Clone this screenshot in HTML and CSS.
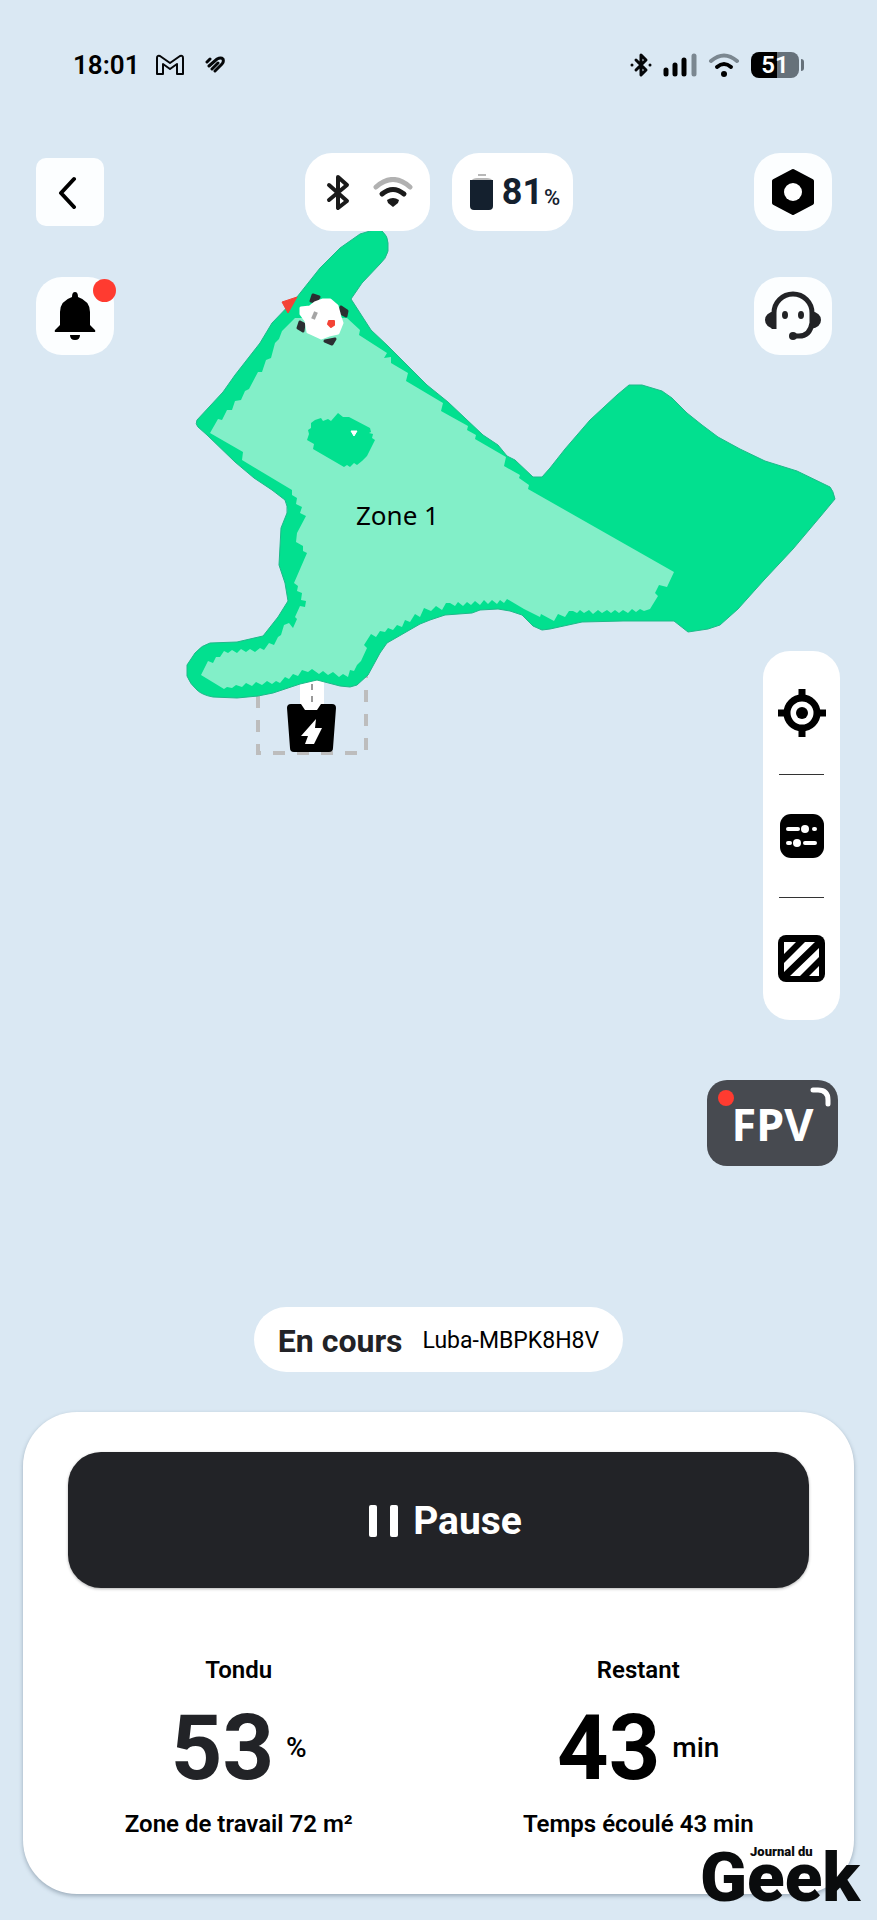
FILE: index.html
```
<!DOCTYPE html>
<html lang="fr">
<head>
    <meta charset="UTF-8">
    <meta name="viewport" content="width=device-width, initial-scale=1">
    <title>Luba-MBPK8H8V</title>
    <link rel="stylesheet" href="styles.css">
</head>
<body>
    <!-- carte -->
    <svg class="map" viewBox="0 0 877 780" aria-hidden="true">
        <rect x="300" y="676" width="24" height="36" fill="#fff"/>
        <path d="M258 696V753H366V675" fill="none" stroke="#bdbdbd" stroke-width="4" stroke-dasharray="12 12"/>
        <path d="M312 684V706" stroke="#999" stroke-width="2" stroke-dasharray="6 6"/>
        <path fill="#02e08f" stroke="#1fb98a" stroke-width="1" stroke-linejoin="round" d="M370 231Q378 228 382 231Q388 236 388 243V251Q386 259 380 264L362 283 351 299 371 330 388 346 427 385 448 402 483 435 498 445 507 456 515 460 533 477H542L550 468 565 449 590 420 617 395 629 385H642L662 391 672 398 687 413 702 425 718 437 740 449 765 461 797 471 830 487Q833 490 835 499L820 517 793 549 764 580 738 609 720 625 708 629 688 632 674 621H623L582 622 550 629 542 630 533 626 522 615 510 611 498 609 480 610 472 613 445 615 430 620 420 624 387 643 380 653 368 675 357 685 350 687 340 686 317 680 300 684 273 693 258 696 237 698 213 697Q202 695 197 690 190 684 187 676L187 665 195 653Q202 645 210 643L237 642 263 636 278 617 288 601 285 583 279 565 281 528 287 513Q288 506 285 500L272 490 254 478 235 462 207 435 198 427Q195 424 197 420L223 392 235 375 260 343 272 323 297 297 320 268 340 248 360 234Z"/>
        <path fill="#82efc8" d="M295 318L347 318 360 330 359 335 387 353 384 358 391 357 391 363 408 373 406 381 443 403 441 411 468 426 467 430 476 435 475 439 506 457 504 466 520 475 519 478 529 485 528 489 674 572 667 587 659 585 655 593 658 596 650 609 644 611 640 609 636 612 632 609 628 613 623 610 619 613 615 610 611 613 607 610 602 613 598 610 593 614 589 610 584 613 580 610 577 613 573 611 569 611 565 617 558 614 554 621 541 614 540 617 524 609 507 599 504 603 500 600 497 604 492 600 488 604 484 600 480 605 475 601 471 605 467 602 463 606 458 602 455 606 450 603 446 603 442 610 436 606 431 611 424 608 420 617 415 614 410 622 405 620 402 627 397 625 393 630 388 628 385 632 380 631 376 637 371 634 364 645 367 648 361 661 357 665 354 671 350 670 348 677 343 674 339 677 333 672 328 675 323 671 319 674 312 669 308 672 302 670 298 676 293 674 289 679 285 677 280 683 276 681 272 684 267 681 262 685 256 682 252 686 246 683 242 687 236 685 232 688 227 687 224 689 201 675 208 661 213 663 216 657 220 657 224 651 228 653 232 650 237 653 241 649 246 652 250 649 255 652 260 648 264 650 269 643 274 645 278 637 281 635 284 625 289 623 293 628 297 619 295 617 300 606 305 607 306 601 301 600 302 593 297 591 298 586 294 583 307 553 303 551 303 546 296 542 297 533 306 516 300 513 302 507 296 504 297 498 292 495 292 490 242 460 243 452 210 433 218 419 222 420 227 410 232 410 235 401 241 400 245 391 249 389 258 372 262 372 266 360 271 358 275 343 279 339 282 331Z"/>
        <path fill="#02e08f" d="M315 420L321 418 323 421 328 419 331 421 338 413 343 417 349 417 370 428 371 432 369 433 373 434 372 438 375 440 367 456 362 461 357 465 354 463 350 467 347 465 344 467 313 449 314 444 307 440 309 434 308 430 311 428 311 423Z"/>
        <path fill="#fff" stroke="#fff" stroke-linejoin="round" d="M351 431L357 431 354 436Z"/>
        <path fill="#f44336" stroke="#f44336" stroke-linejoin="round" d="M282 302L297 297 288 313Z"/>
        <g stroke-linejoin="round">
            <g fill="#2b2f32" stroke="#2b2f32" stroke-width="3">
                <path d="M313 295L319 297 316 302 311 301Z"/>
                <path d="M341 307L347 311 346 316 340 313Z"/>
                <path d="M300 322L304 324 303 331 298 328Z"/>
                <path d="M325 341L335 339 332 344Z"/>
            </g>
            <path fill="#fff" stroke="#fff" stroke-width="3" d="M301 308L310 307 315 303 323 300 330 300 337 306 340 317 342 323 338 333 329 335 321 338 308 332 306 321 301 314Z"/>
            <path stroke="#a5a5a5" stroke-width="4" d="M316 312L313 319"/>
            <path fill="#f44336" stroke="#f44336" stroke-width="2" d="M329 321L334 321 334 325 331 327 328 324Z"/>
        </g>
        <path d="M291 704H301L305 710H317L321 704H332Q336 704 336 708L333 748Q333 752 329 752H294Q290 752 290 748L287 708Q287 704 291 704Z"/>
        <path fill="#fff" d="M316 719L301 736H308L305 744H314L322 728H315Z"/>
        <text class="map-label" x="356" y="525">Zone 1</text>
    </svg>

    <div class="statusbar">
        <div class="status-left">
            <span class="clock">18:01</span>
            <svg width="28" height="22" viewBox="0 0 28 22" fill="none" stroke="#050709" stroke-width="2" stroke-linejoin="round"><path d="M1 20V4Q1 1 4 2L14 9 24 2Q27 1 27 4V20H21V10L14 15 7 10V20Z"/></svg>
            <svg class="heart" width="22" height="18" viewBox="0 0 22 18" fill="none" stroke="#050709" stroke-width="3" stroke-linecap="round"><path d="M3 6L6 3M5 10L13 3Q17 1 19 3 20 6 18 8L11 15M8 13L14 7"/></svg>
        </div>
        <div class="status-right">
            <svg width="22" height="26" viewBox="0 0 22 26" fill="none" stroke="#050709" stroke-width="3" stroke-linejoin="round" stroke-linecap="round"><path d="M6 8L16 18 11 23V3L16 8 6 18"/><path d="M2 13H2M20 13H20"/></svg>
            <svg width="34" height="24" viewBox="0 0 34 24" stroke="#000" stroke-width="5" stroke-linecap="round"><path d="M3 17V21M12 12V21M21 7V21"/><path stroke="#7b8790" d="M31 3V21"/></svg>
            <svg width="32" height="24" viewBox="0 0 32 24" fill="none" stroke-width="4" stroke-linecap="round"><path stroke="#7b8790" d="M3 8Q16 -3 29 8"/><path stroke="#000" d="M9 14Q16 8 23 14"/><circle cx="16" cy="21" r="3" fill="#000"/></svg>
            <span class="battery">51</span>
        </div>
    </div>

    <main>
        <div class="top-row">
            <div class="side">
                <button class="btn back" type="button" aria-label="Retour">
                    <svg width="20" height="34" viewBox="0 0 20 34" fill="none" stroke="#000" stroke-width="4" stroke-linecap="round" stroke-linejoin="round"><path d="M17 4L4 18 17 32"/></svg>
                </button>
            </div>
            <div class="center">
                <button class="pill connection" type="button" aria-label="Connexion">
                    <svg width="24" height="38" viewBox="0 0 24 38" fill="none" stroke="#1a1a1a" stroke-width="4" stroke-linecap="round" stroke-linejoin="round"><path d="M3 12L21 28 12 35V4L21 12 3 27"/></svg>
                    <svg width="40" height="30" viewBox="0 0 40 30" fill="none" stroke-width="5" stroke-linecap="round"><path stroke="#b1b1b1" d="M3 10Q20 -5 37 10"/><path stroke="#1a1a1a" d="M9 17Q20 8 31 17"/><path fill="#1a1a1a" d="M14 23Q20 19 26 23L25 26 20 30 15 26Z"/></svg>
                </button>
                <button class="pill charge" type="button">
                    <svg width="24" height="38" viewBox="0 0 24 38"><path fill="#b8b8b8" d="M8 1H16V3H8ZM1 8Q3 5 7 5H17Q21 5 23 8Z"/><path fill="#14202e" d="M0 7H23V33Q23 37 19 37H4Q0 37 0 33Z"/></svg>
                    <span class="charge-value">81</span><small>%</small>
                </button>
            </div>
            <div class="side right">
                <button class="btn" type="button" aria-label="Réglages">
                    <svg width="44" height="50" viewBox="0 0 44 50"><path stroke="#000" stroke-width="4" stroke-linejoin="round" d="M22 4L41 14V36L22 46 3 36V14Z"/><circle cx="22" cy="25" r="9" fill="#fff"/></svg>
                </button>
            </div>
        </div>

        <div class="second-row">
            <button class="btn bell" type="button" aria-label="Notifications">
                <svg width="42" height="50" viewBox="0 0 42 50"><path d="M21 1Q24 1 24 6 36 10 36 21V34L41 39Q42 41 40 41H2Q0 41 1 39L6 34V21Q6 10 18 6 18 1 21 1ZM16 44H26Q26 49 21 49T16 44Z"/></svg>
                <span class="badge"></span>
            </button>
            <button class="btn support" type="button" aria-label="Assistance">
                <svg width="58" height="50" viewBox="0 0 58 50" fill="none" stroke="#222326" stroke-width="5"><path d="M10 38V22A19 19 0 0 1 48 22V32Q46 45 35 45H29"/><path fill="#222326" stroke="none" d="M11 20V38Q1 36 1 29T11 20ZM47 20V38Q57 36 57 29T47 20Z"/><circle cx="29" cy="45" r="4" fill="#222326" stroke="none"/><ellipse cx="21" cy="24" rx="3" ry="4" fill="#222326" stroke="none"/><ellipse cx="37" cy="24" rx="3" ry="4" fill="#222326" stroke="none"/></svg>
            </button>
        </div>

        <div class="tools">
            <button type="button" aria-label="Centrer">
                <svg width="48" height="48" viewBox="0 0 48 48" fill="none" stroke="#000"><path stroke-width="7" d="M24 0V9M24 39V48M0 24H9M39 24H48"/><circle cx="24" cy="24" r="15" stroke-width="7"/><circle cx="24" cy="24" r="6" fill="#000" stroke="none"/></svg>
            </button>
            <button type="button" aria-label="Paramètres">
                <svg width="44" height="44" viewBox="0 0 44 44" stroke="#fff" stroke-width="4" stroke-linecap="round"><rect width="44" height="44" rx="11" fill="#000" stroke="none"/><path d="M8 15H18M34 15H35M8 29H10M25 29H35"/><circle cx="25" cy="15" r="4" fill="#fff" stroke="none"/><circle cx="17" cy="29" r="4" fill="#fff" stroke="none"/></svg>
            </button>
            <button type="button" aria-label="Zones">
                <svg width="47" height="47" viewBox="0 0 47 47"><rect width="47" height="47" rx="8"/><path fill="#fff" d="M6 7H18L6 19ZM27 7H37L6 37V28ZM41 13V22L22 41H12ZM41 31V41H31Z"/></svg>
            </button>
        </div>

        <button class="fpv" type="button">
            <span class="rec"></span>
            FPV
            <svg class="corner" width="21" height="21" viewBox="0 0 21 21" fill="none" stroke="#fff" stroke-width="5" stroke-linecap="round"><path d="M3 3H8Q18 3 18 13V17"/></svg>
        </button>

        <div class="device">
            <strong>En cours</strong>
            <span>Luba-MBPK8H8V</span>
        </div>

        <section class="card">
            <button class="pause" type="button">
                <svg width="30" height="32" viewBox="0 0 30 32" fill="#fff"><rect width="8" height="32" rx="2"/><rect x="21" width="8" height="32" rx="2"/></svg>
                Pause
            </button>
            <div class="stats">
                <div class="stat">
                    <h2>Tondu</h2>
                    <p class="value">53 <span>%</span></p>
                    <p>Zone de travail 72 m²</p>
                </div>
                <div class="stat dark">
                    <h2>Restant</h2>
                    <p class="value">43 <span>min</span></p>
                    <p>Temps écoulé 43 min</p>
                </div>
            </div>
        </section>
    </main>

    <div class="watermark">
        <span>Journal du</span>
        <b>Geek</b>
    </div>
</body>
</html>
```
FILE: styles.css
```
* {
    box-sizing: border-box;
}

body {
    position: relative;
    margin: 0;
    background-color: #dae8f3;
    color: #000;
    font-family: Roboto, "Liberation Sans", sans-serif;
}

button {
    padding: 0;
    border: none;
    font-family: inherit;
    color: inherit;
    cursor: pointer;
}

svg {
    display: block;
    flex: none;
}

.map {
    position: absolute;
    top: 0;
    left: 0;
    width: 100%;
    z-index: -1;
}

.map-label {
    font-family: "Noto Sans", sans-serif;
    font-size: 26px;
}

/* barre d'état */
.statusbar {
    display: flex;
    justify-content: space-between;
    align-items: center;
    height: 130px;
    padding: 0 73px;
}

.status-left {
    display: flex;
    align-items: center;
    gap: 16px;
}

.heart {
    margin-left: 4px;
}

.status-right {
    display: flex;
    align-items: center;
    gap: 11px;
}

.clock {
    font-size: 26px;
    font-weight: 600;
}

.battery {
    position: relative;
    width: 48px;
    height: 26px;
    margin-right: 5px;
    border-radius: 8px;
    background: linear-gradient(to right, #000 54%, #66717a 54%);
    color: #fff;
    font-size: 24px;
    font-weight: 600;
    line-height: 26px;
    text-align: center;
}

.battery::after {
    content: "";
    position: absolute;
    right: -5px;
    top: 7px;
    width: 3px;
    height: 12px;
    border-radius: 0 3px 3px 0;
    background-color: #66717a;
}

main {
    display: flex;
    flex-direction: column;
    padding: 23px 23px 22px;
}

/* boutons du haut */
.top-row {
    display: grid;
    grid-template-columns: 1fr auto 1fr;
    align-items: center;
    padding: 0 13px;
}

.center {
    display: flex;
    gap: 22px;
}

.right {
    display: flex;
    justify-content: flex-end;
    padding-right: 9px;
}

.btn {
    position: relative;
    display: flex;
    align-items: center;
    justify-content: center;
    width: 78px;
    height: 78px;
    border-radius: 26px;
    background-color: #fcfeff;
}

.back {
    width: 68px;
    height: 68px;
    padding-right: 6px;
    border-radius: 10px;
}

.pill {
    display: flex;
    align-items: center;
    justify-content: center;
    height: 78px;
    border-radius: 27px;
    background-color: #fff;
}

.connection {
    width: 125px;
    padding-left: 5px;
    gap: 23px;
}

.charge {
    width: 121px;
    padding-left: 6px;
    color: #14202e;
}

.charge-value {
    margin-left: 8px;
    font-size: 36px;
    font-weight: 700;
}

.charge small {
    padding-top: 10px;
    margin-left: 1px;
    font-size: 22px;
    font-weight: 500;
}

.second-row {
    display: flex;
    justify-content: space-between;
    margin-top: 46px;
    padding: 0 22px 0 13px;
}

.badge {
    position: absolute;
    top: 2px;
    right: -2px;
    width: 23px;
    height: 23px;
    border-radius: 50%;
    background-color: #ff3b30;
}

/* outils de la carte */
.tools {
    display: flex;
    flex-direction: column;
    align-self: flex-end;
    width: 77px;
    margin: 296px 14px 0 0;
    border-radius: 27px;
    background-color: #fff;
}

.tools button {
    position: relative;
    display: flex;
    align-items: center;
    justify-content: center;
    height: 123px;
    background: none;
}

.tools button + button::before {
    content: "";
    position: absolute;
    top: 0;
    left: 16px;
    right: 16px;
    height: 1px;
    background-color: #333;
}

.fpv {
    position: relative;
    align-self: flex-end;
    width: 131px;
    height: 86px;
    margin: 60px 16px 0 0;
    border-radius: 20px;
    background-color: #474a50;
    color: #fff;
    font-family: "Noto Sans", sans-serif;
    font-size: 45px;
    font-weight: 700;
    line-height: 88px;
}

.rec {
    position: absolute;
    top: 10px;
    left: 11px;
    width: 16px;
    height: 16px;
    border-radius: 50%;
    background-color: #ff3b30;
}

.corner {
    position: absolute;
    top: 7px;
    right: 7px;
}

.device {
    display: flex;
    align-items: center;
    align-self: center;
    gap: 20px;
    height: 65px;
    margin-top: 141px;
    padding: 2px 24px 0;
    border-radius: 33px;
    background-color: #fff;
    font-size: 23px;
}

.device strong {
    color: #222327;
    font-size: 32px;
}

/* carte du bas */
.card {
    margin-top: 40px;
    padding: 40px 16px 56px;
    border-radius: 54px;
    background-color: #fff;
    box-shadow: 0 2px 4px rgba(60, 80, 100, 0.4);
}

.pause {
    display: flex;
    align-items: center;
    justify-content: center;
    gap: 14px;
    width: calc(100% - 58px);
    height: 136px;
    margin: 0 29px;
    padding: 2px 0 0 14px;
    border-radius: 33px;
    background-color: #222327;
    box-shadow: 0 1px 3px rgba(0, 0, 0, 0.3);
    color: #fff;
    font-size: 39px;
    font-weight: 700;
}

.stats {
    display: grid;
    grid-template-columns: 1fr 1fr;
    margin-top: 68px;
    text-align: center;
}

.stat h2,
.stat p {
    margin: 0;
    font-size: 24px;
    font-weight: 600;
    line-height: 28px;
}

.stat .value {
    display: flex;
    align-items: center;
    justify-content: center;
    gap: 12px;
    margin: 14px 0 10px;
    color: #222327;
    font-size: 90px;
    font-weight: 700;
    line-height: 102px;
}

.stat.dark .value {
    color: #000;
}

.value span {
    padding-bottom: 3px;
    color: #000;
    font-size: 28px;
    font-weight: 500;
    line-height: 32px;
}

.watermark {
    position: absolute;
    right: 17px;
    bottom: 12px;
    color: #0a0c0d;
    line-height: 1;
}

.watermark span {
    position: absolute;
    top: -7px;
    left: 50px;
    font-size: 13px;
    font-weight: 900;
    white-space: nowrap;
}

.watermark b {
    display: block;
    font-size: 69px;
    font-weight: 900;
    line-height: 52px;
}
```
